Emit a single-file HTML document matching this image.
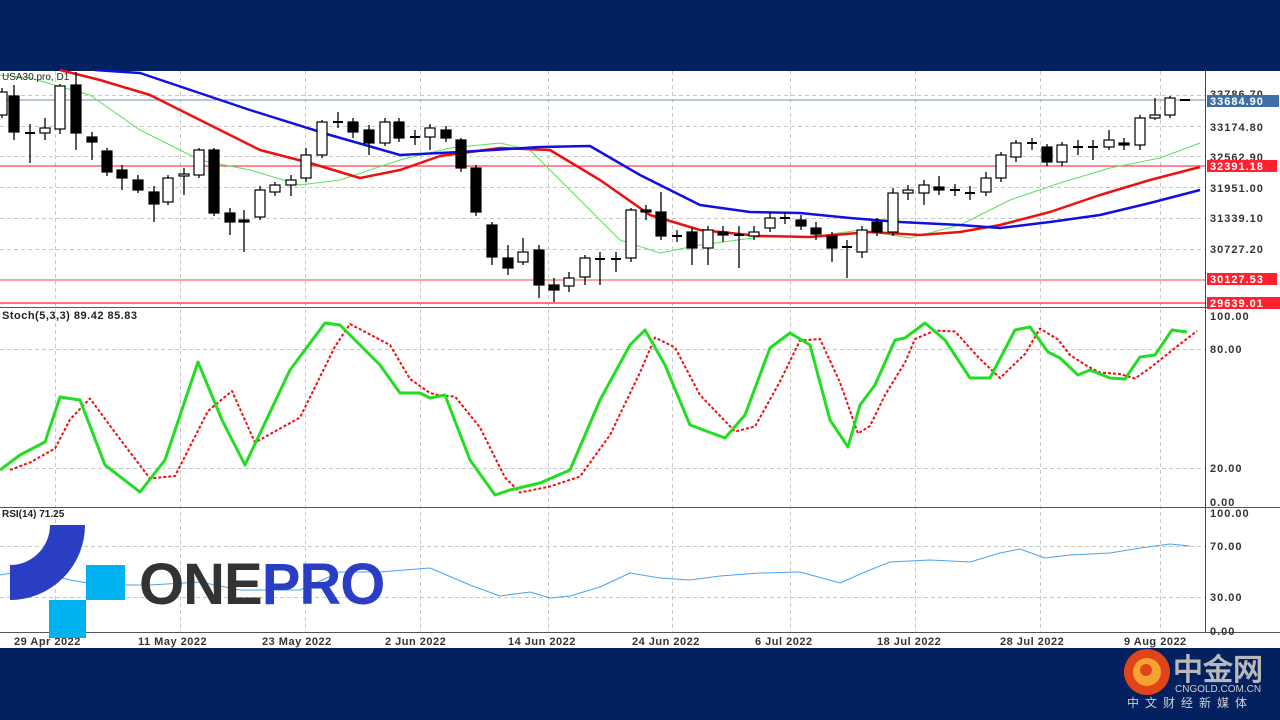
<!DOCTYPE html>
<html><head><meta charset="utf-8"><style>
html,body{margin:0;padding:0;width:1280px;height:720px;overflow:hidden;background:#fff}
svg{display:block}
text{font-family:"Liberation Sans",sans-serif}
</style></head><body>
<svg id="s" width="1280" height="720" xmlns="http://www.w3.org/2000/svg">
<rect x="0" y="0" width="1280" height="71" fill="#03205f"/>
<rect x="0" y="71" width="1280" height="577" fill="#fff"/>
<rect x="0" y="648" width="1280" height="72" fill="#03205f"/>
<g id="grid" stroke="#c8c8c8" stroke-dasharray="4,3" stroke-width="1"></g>
<line x1="0" y1="100" x2="1205" y2="100" stroke="#6f8fb3" stroke-width="1"/>
<line x1="0" y1="166" x2="1205" y2="166" stroke="#ff4050" stroke-width="1.3"/>
<line x1="0" y1="280" x2="1205" y2="280" stroke="#ff4050" stroke-width="1"/>
<line x1="0" y1="303" x2="1205" y2="303" stroke="#ff7080" stroke-width="2"/>
<g id="ma"></g>
<g id="candles"></g>
<line x1="0" y1="307.5" x2="1280" y2="307.5" stroke="#555" stroke-width="1"/>
<line x1="0" y1="507.5" x2="1280" y2="507.5" stroke="#555" stroke-width="1"/>
<line x1="0" y1="632.5" x2="1280" y2="632.5" stroke="#555" stroke-width="1"/>
<line x1="1205.5" y1="71" x2="1205.5" y2="633" stroke="#444" stroke-width="1"/>
<g id="osc"></g>
<text x="2" y="80" font-size="10" fill="#222">USA30.pro, D1</text>
<text x="2" y="319" font-size="11" font-weight="bold" fill="#222" letter-spacing="0.5">Stoch(5,3,3) 89.42 85.83</text>
<text x="2" y="517" font-size="10" font-weight="bold" fill="#222">RSI(14) 71.25</text>
<g font-size="11" font-weight="bold" fill="#333" letter-spacing="1">
<text x="1210" y="98">33786.70</text>
<rect x="1207" y="95" width="72" height="12" fill="#3f6ea5"/>
<text x="1210" y="105" fill="#fff">33684.90</text>
<text x="1210" y="131">33174.80</text>
<text x="1210" y="161">32562.90</text>
<rect x="1207" y="160" width="70" height="12" fill="#ff2030"/>
<text x="1210" y="170" fill="#fff">32391.18</text>
<text x="1210" y="192">31951.00</text>
<text x="1210" y="222">31339.10</text>
<text x="1210" y="253">30727.20</text>
<rect x="1207" y="273" width="70" height="12" fill="#ff2030"/>
<text x="1210" y="283" fill="#fff">30127.53</text>
<rect x="1207" y="297" width="73" height="12" fill="#ff2030"/>
<text x="1210" y="307" fill="#fff">29639.01</text>
<text x="1210" y="320">100.00</text>
<text x="1210" y="353">80.00</text>
<text x="1210" y="472">20.00</text>
<text x="1210" y="506">0.00</text>
<text x="1210" y="517">100.00</text>
<text x="1210" y="550">70.00</text>
<text x="1210" y="601">30.00</text>
<text x="1210" y="635">0.00</text>
</g>
<g font-size="11" font-weight="bold" fill="#333" letter-spacing="0.5">
<text x="14" y="645">29 Apr 2022</text>
<text x="138" y="645">11 May 2022</text>
<text x="262" y="645">23 May 2022</text>
<text x="385" y="645">2 Jun 2022</text>
<text x="508" y="645">14 Jun 2022</text>
<text x="632" y="645">24 Jun 2022</text>
<text x="755" y="645">6 Jul 2022</text>
<text x="877" y="645">18 Jul 2022</text>
<text x="1000" y="645">28 Jul 2022</text>
<text x="1124" y="645">9 Aug 2022</text>
</g>
<path d="M67.5 525 A57.5 57.5 0 0 1 10 582.5" fill="none" stroke="#2a3ec4" stroke-width="35" stroke-linecap="butt"/>
<rect x="86" y="565" width="39" height="35" fill="#00b3f0"/>
<rect x="49" y="600" width="37" height="38" fill="#00b3f0"/>
<text x="139" y="604" font-size="58" font-weight="bold" fill="#333" letter-spacing="-1">ONE<tspan fill="#2a3ec4">PRO</tspan></text>
<circle cx="1147" cy="672" r="23" fill="#e04418"/>
<circle cx="1147" cy="672" r="14" fill="#f5a431"/>
<circle cx="1146" cy="670" r="6" fill="#e04418"/>
<text x="1173" y="680" font-size="30" font-weight="bold" fill="#b9b9b9" font-family="'Liberation Sans','Noto Sans CJK SC',sans-serif">中金网</text>
<text x="1175" y="692" font-size="10" fill="#cfcfcf">CNGOLD.COM.CN</text>
<text x="1127" y="707" font-size="12" fill="#cfcfcf" letter-spacing="6" font-family="'Liberation Sans','Noto Sans CJK SC',sans-serif">中文财经新媒体</text>
</svg>
<script>
var NS="http://www.w3.org/2000/svg";
function el(p,t,a){var e=document.createElementNS(NS,t);for(var k in a)e.setAttribute(k,a[k]);p.appendChild(e);return e;}
var g=document.getElementById('grid');
[55,180,305,420,548,672,790,915,1040,1160].forEach(function(x){el(g,'line',{x1:x+.5,y1:71,x2:x+.5,y2:632});});
[95,126,156,187,218,249,349,468,546,597].forEach(function(y){el(g,'line',{x1:0,y1:y+.5,x2:1205,y2:y+.5});});
function pl(p,pts,c,w,d){el(p,'polyline',{points:pts.map(function(a){return a.join(',')}).join(' '),fill:'none',stroke:c,'stroke-width':w,'stroke-dasharray':d||'none','stroke-linejoin':'round'});}
var m=document.getElementById('ma');
pl(m,[[0,75],[30,78],[90,95],[140,130],[200,160],[250,170],[300,185],[340,180],[400,160],[450,148],[500,143],[530,150],[570,190],[620,240],[660,253],[700,245],[760,237],[810,237],[860,230],[910,238],[960,225],[1010,200],[1060,183],[1110,168],[1160,158],[1200,143]],'#5de05d',1);
pl(m,[[60,70],[100,80],[150,95],[210,125],[260,150],[310,163],[360,178],[400,170],[440,156],[500,148],[550,150],[600,180],[650,215],[700,230],[760,236],[810,237],[870,232],[920,235],[960,232],[1000,225],[1050,212],[1100,195],[1150,180],[1200,167]],'#ee1010',2.5);
pl(m,[[95,70],[140,73],[250,110],[330,135],[400,155],[460,152],[540,147],[590,146],[640,175],[700,205],[750,212],[800,213],[850,218],[900,222],[960,225],[1000,228],[1050,222],[1100,215],[1150,203],[1200,190]],'#1010e0',2.5);
var C=[[2,115,92,88,118],[14,96,132,85,140],[30,133,133,124,163],[45,133,128,118,140],[60,129,86,84,134],[76,85,133,72,150],[92,137,142,132,160],[107,151,172,148,176],[122,170,178,165,190],[138,180,190,175,193],[154,192,204,186,222],[168,202,178,175,205],[184,176,174,168,195],[199,175,150,148,178],[214,150,213,148,216],[230,213,222,208,235],[244,220,222,210,252],[260,217,190,186,220],[275,192,185,182,196],[291,185,180,175,196],[306,178,155,148,182],[322,155,122,120,158],[338,122,122,112,128],[353,122,132,118,138],[369,130,143,125,155],[385,143,122,118,146],[399,122,138,118,142],[415,137,137,130,145],[430,137,128,124,150],[446,130,138,126,142],[461,140,168,138,172],[476,168,212,165,216],[492,225,257,222,265],[508,258,268,245,275],[523,262,252,238,265],[539,250,285,245,298],[554,285,290,278,302],[569,286,278,272,292],[585,277,258,255,285],[600,259,259,252,285],[616,259,259,252,272],[631,258,210,208,262],[646,210,212,205,220],[661,212,236,192,240],[677,236,236,230,242],[692,232,248,228,265],[708,248,230,226,265],[723,232,235,226,242],[739,235,235,226,268],[754,236,232,226,240],[770,228,218,212,232],[785,218,218,212,224],[801,220,226,215,230],[816,228,234,222,240],[832,236,248,232,262],[847,247,247,240,278],[862,252,230,226,258],[877,222,232,218,236],[893,232,193,188,236],[908,193,190,185,200],[924,193,185,180,205],[939,187,190,176,195],[955,190,190,184,196],[970,193,193,186,200],[986,192,178,172,196],[1001,178,155,152,182],[1016,157,143,140,162],[1032,143,143,138,150],[1047,147,162,144,166],[1062,162,145,142,166],[1078,147,147,140,155],[1093,147,147,140,160],[1109,147,140,130,150],[1124,143,145,138,150],[1140,145,118,115,150],[1155,118,115,98,120],[1170,115,98,96,118],[1185,100,100,100,101]];
var cg=document.getElementById('candles');
C.forEach(function(c){var x=c[0],o=c[1],cl=c[2],h=c[3],l=c[4];
el(cg,'line',{x1:x,y1:h,x2:x,y2:l,stroke:'#000','stroke-width':1.3});
var t=Math.min(o,cl),b=Math.max(o,cl);
if(b-t<2){el(cg,'line',{x1:x-5,y1:t,x2:x+5,y2:t,stroke:'#000','stroke-width':2});}
else el(cg,'rect',{x:x-5,y:t,width:10,height:b-t,fill:o<cl?'#000':'#fff',stroke:'#000','stroke-width':1.2});});
var os=document.getElementById('osc');
var sg=[[0,470],[20,455],[45,442],[60,397],[80,400],[105,465],[140,492],[165,460],[198,362],[222,420],[245,465],[290,370],[325,323],[340,325],[380,365],[400,393],[420,393],[430,398],[445,395],[470,460],[495,495],[510,490],[540,483],[570,470],[600,400],[630,345],[645,330],[665,365],[690,425],[725,438],[745,415],[770,348],[790,333],[810,345],[830,420],[848,447],[860,405],[875,385],[895,340],[905,338],[925,323],[945,340],[970,378],[990,378],[1015,330],[1030,327],[1048,352],[1060,358],[1078,375],[1090,370],[1110,378],[1125,379],[1140,357],[1155,355],[1172,330],[1187,332]];
var sr=sg.map(function(p,i){var prev=sg[i-1]||p;return [p[0]+10,(p[1]+prev[1])/2];});
pl(os,sr,'#ee1010',2,'3,2');
pl(os,sg,'#22dd22',3);
pl(os,[[0,575],[30,570],[70,580],[100,585],[150,585],[200,582],[240,590],[300,590],[340,572],[380,572],[430,568],[470,585],[500,596],[530,592],[550,598],[570,596],[600,587],[630,573],[660,578],[690,580],[720,576],[760,573],[800,572],[840,583],[865,572],[890,562],[930,560],[970,562],[1000,553],[1020,549],[1045,558],[1070,555],[1110,553],[1140,548],[1170,544],[1190,546]],'#4aa3f0',1);
</script>
</body></html>
